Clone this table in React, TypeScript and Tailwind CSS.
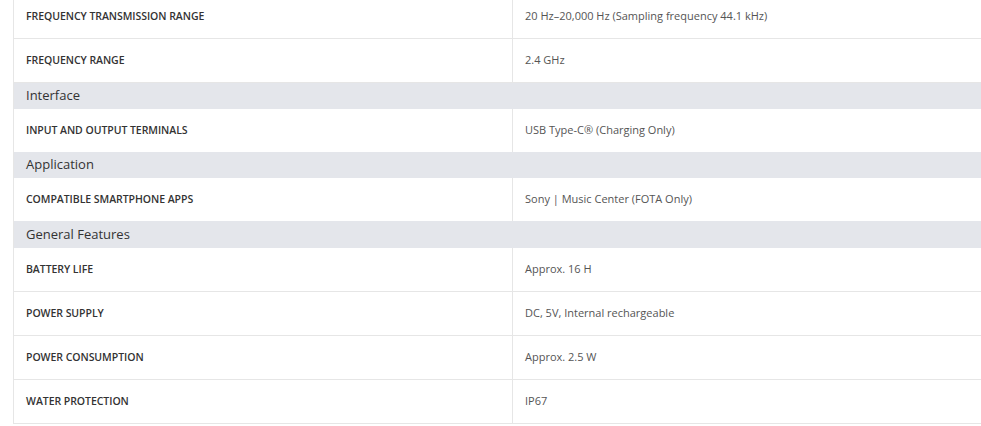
import React from "react";

type Item = { kind: "row"; label: string; value: string } | { kind: "section"; title: string };

const items: Item[] = [
  { kind: "row", label: "FREQUENCY TRANSMISSION RANGE", value: "20 Hz–20,000 Hz (Sampling frequency 44.1 kHz)" },
  { kind: "row", label: "FREQUENCY RANGE", value: "2.4 GHz" },
  { kind: "section", title: "Interface" },
  { kind: "row", label: "INPUT AND OUTPUT TERMINALS", value: "USB Type-C\u00AE (Charging Only)" },
  { kind: "section", title: "Application" },
  { kind: "row", label: "COMPATIBLE SMARTPHONE APPS", value: "Sony | Music Center (FOTA Only)" },
  { kind: "section", title: "General Features" },
  { kind: "row", label: "BATTERY LIFE", value: "Approx. 16 H" },
  { kind: "row", label: "POWER SUPPLY", value: "DC, 5V, Internal rechargeable" },
  { kind: "row", label: "POWER CONSUMPTION", value: "Approx. 2.5 W" },
  { kind: "row", label: "WATER PROTECTION", value: "IP67" },
];

export default function App() {
  return (
    <div className="w-[981px] h-[426px] overflow-hidden bg-white" style={{ fontFamily: '"Open Sans", "Noto Sans", sans-serif' }}>
      <div className="ml-[13px] -mt-[5px] w-[998px] border-l border-[#e6e6e6]">
        {items.map((it, i) => {
          if (it.kind === "section") {
            return (
              <div
                key={i}
                className={
                  i === 6
                    ? "h-[27px] flex items-center bg-[#e4e6eb] px-[12px] text-[13px] text-[#333]"
                    : "h-[26px] flex items-center bg-[#e4e6eb] px-[12px] text-[13px] text-[#333]"
                }
              >
                {it.title}
              </div>
            );
          }
          const beforeSection = i > 1 && items[i + 1]?.kind === "section";
          return (
            <div key={i} className={beforeSection ? "h-[43px] flex" : "h-[44px] flex border-b border-[#e6e6e6]"}>
              <div className="w-[498px] flex items-center px-[12px] text-[10.5px] font-semibold text-[#333] tracking-[-0.05px]">
                {it.label}
              </div>
              <div className="flex-1 flex items-center border-l border-[#e6e6e6] px-[12px] text-[11px] text-[#555]">
                {it.value}
              </div>
            </div>
          );
        })}
      </div>
    </div>
  );
}
